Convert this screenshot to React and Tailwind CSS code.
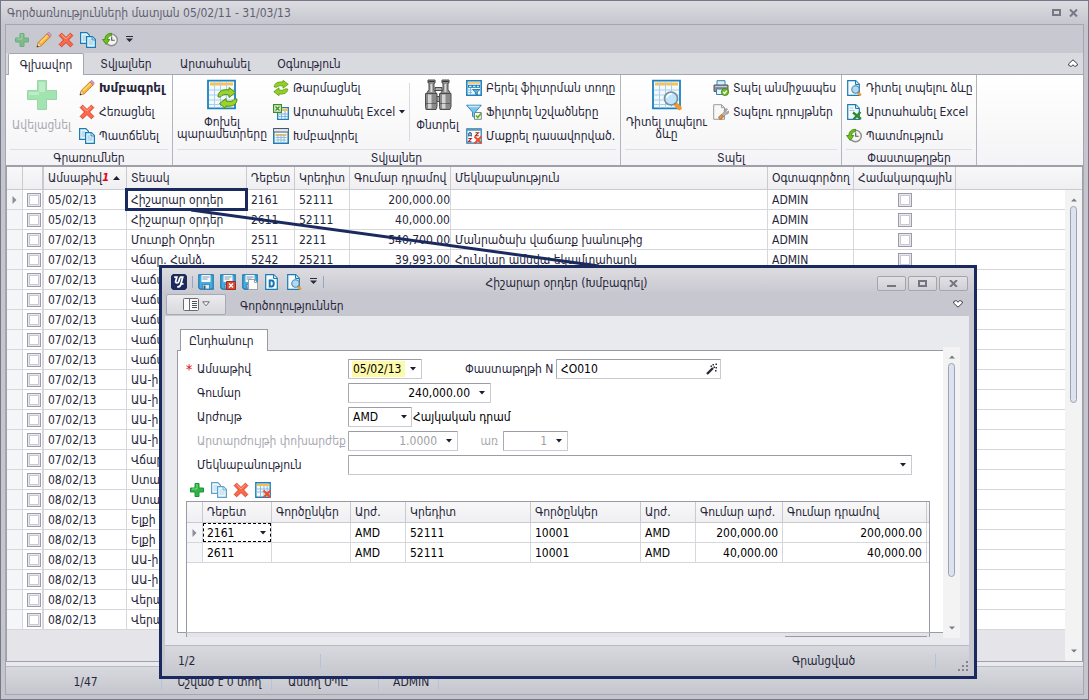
import React from "react";

/* ---------- icons ---------- */

const Svg = ({ size = 16, children, className = "" }) => (
  <svg
    width={size}
    height={size}
    viewBox={`0 0 ${size} ${size}`}
    className={`shrink-0 ${className}`}
    aria-hidden="true"
  >
    {children}
  </svg>
);

const PlusIcon = ({ faded = false }) => (
  <Svg className={faded ? "opacity-50" : ""}>
    <path d="M6 1.500h4V6h4.500v4H10v4.500H6V10H1.500V6H6z" fill="#2fb344" stroke="#1d9434" />
    <path d="M7 2.500h1V7H3" fill="none" stroke="#7fdc8c" />
  </Svg>
);

const BigPlusIcon = () => (
  <Svg size={32}>
    <path d="M11.500 1.500h9v10h10v9h-10v10h-9v-10h-10v-9h10z" fill="#a3e3b0" stroke="#9bd6a8" />
    <path d="M13 3h6v10H13zM3 13h10v3H3z" fill="#bdedc6" />
  </Svg>
);

const PencilIcon = () => (
  <Svg>
    <path d="M1 15l1.300-4.600L11 1.800l3.300 3L5.500 13.600z" fill="#fbb034" stroke="#b5741c" strokeWidth=".8" />
    <path d="M3.500 10.300L11 3l1.200 1L4.800 11.600z" fill="#ffd777" />
    <path d="M11 1.800l1.200-1.200c.6-.6 3.600 2 2.900 2.900l-1 1.300z" fill="#d79bc4" stroke="#a66a96" strokeWidth=".6" />
    <path d="M1 15l1.300-4.200 2.900 2.800z" fill="#fbe3bd" stroke="#b5741c" strokeWidth=".5" />
    <path d="M.8 15.200l.6-2 1.500 1.300z" fill="#333" />
  </Svg>
);

const CrossIcon = () => (
  <Svg>
    <path
      d="M3.600 1.200L8 5.400l4.400-4.200 2.400 2.400L10.500 8l4.300 4.400-2.400 2.400L8 10.600l-4.400 4.200-2.400-2.400L5.500 8 1.200 3.600z"
      fill="#fb6a4a"
      stroke="#d8321c"
      strokeWidth=".9"
    />
    <path d="M3.600 2.600L8 6.800l4.400-4.200" fill="none" stroke="#ffab95" />
  </Svg>
);

const CopyIcon = ({ soft = false }) => (
  <Svg className={soft ? "opacity-70" : ""}>
    <path d="M.6.600h6.200l2.600 2.600v8.200H.6z" fill="#e9f6fd" stroke="#1a7cb2" strokeWidth="1.200" />
    <path d="M2.500 4h3.500M2.500 6h5M2.500 8h5" stroke="#8cc6e4" />
    <path d="M6.600 4.600h5.800l3 3v7.800H6.600z" fill="#e3f3fc" stroke="#1a7cb2" strokeWidth="1.200" />
    <path d="M12 4.800v3.200h3.200" fill="#bfe2f4" stroke="#1a7cb2" strokeWidth=".8" />
    <path d="M8.500 8h2.500M8.500 10h5M8.500 12h5" stroke="#8cc6e4" />
  </Svg>
);

const HistoryIcon = () => (
  <Svg>
    <circle cx="9.500" cy="8" r="5.800" fill="#f4f4f1" stroke="#8f8f8a" strokeWidth="1.400" />
    <path d="M9.700 4.500V8.300h3" fill="none" stroke="#555" strokeWidth="1.100" />
    <path d="M9.500 1.300C5 1.300 3 4 2.800 7.500H.5l3.700 5 3.600-5H5.600C5.700 5.200 7 3.700 9.500 3.500z" fill="#6fc11d" stroke="#3c8310" strokeWidth=".8" />
  </Svg>
);

const RefreshIcon = () => (
  <Svg>
    <path d="M1.200 7C1.200 3.200 5 1.400 10 2V.3l5.200 4L10 8.200V6C7 5.500 5 5.800 3.800 7.200z" fill="#93cf26" stroke="#5c9a12" strokeWidth=".8" />
    <path d="M14.800 9c0 3.800-3.800 5.600-8.800 5v1.700L.8 11.700 6 7.800V10c3 .5 5 .2 6.200-1.200z" fill="#93cf26" stroke="#5c9a12" strokeWidth=".8" />
  </Svg>
);

const SheetShape = () => (
  <>
    <path d="M.8.800h14.400v14.400H.8z" fill="#f2f8fd" stroke="#1c7fb8" strokeWidth="1.400" />
    <path d="M2 2h12v2H2z" fill="#f8bd4a" />
    <path d="M2 7h12M2 10h12M5.500 4v10M9 4v10M12.200 4v10" stroke="#8bbfe6" />
  </>
);

const ExcelTableIcon = () => (
  <Svg>
    <path d="M4.700 3.700h10.600v11.600H4.700z" fill="#f2f8fd" stroke="#1c7fb8" strokeWidth="1.300" />
    <path d="M9 5h6v2H9z" fill="#f8bd4a" />
    <path d="M6 10h9M6 12.500h9M8.500 9v6M12 7v8" stroke="#7fb4e2" />
    <path d="M.6.600h7.800v7.800H.6z" fill="#e7f5df" stroke="#3f8d22" strokeWidth="1.200" />
    <path d="M2.500 2.500l4 4M6.500 2.500l-4 4" stroke="#3f8d22" strokeWidth="1.300" />
  </Svg>
);

const GroupIcon = () => (
  <Svg>
    <path d="M.7.700h14.600v14.600H.7z" fill="#f2f8fd" stroke="#46566b" strokeWidth="1.200" />
    <path d="M1 1.200h14v2.300H1z" fill="#dfe7f0" />
    <path d="M.7 4h14.600" stroke="#46566b" />
    <path d="M.7 4.500v10.800h14.600V4.500" fill="none" stroke="#1c7fb8" strokeWidth="1.200" />
    <path d="M2.500 6h11v2h-11z" fill="#f8bd4a" />
    <path d="M2.500 9.500h11M2.500 12h11M5 6v8M8 6v8M11 6v8" stroke="#8bbfe6" />
  </Svg>
);

const FilterRowIcon = () => (
  <Svg>
    <path d="M.8.800h14.400v14.400H.8z" fill="#eef7fd" stroke="#1c7fb8" strokeWidth="1.500" />
    <path d="M2 2.200h12v1.500H2z" fill="#f8bd4a" />
    <path d="M2 4.800h12v3H2z" fill="#1c7fb8" />
    <path d="M3 6.300h2.500M7 6.300h2.500M11 6.300h2" stroke="#fff" />
    <path d="M2 10h4M2 12.500h4M4.500 8v6" stroke="#8bbfe6" />
    <path d="M6.500 9.500h7.500l-2.700 2.500v3l-2-1v-2z" fill="#58aee0" stroke="#1c6d9f" strokeWidth=".8" />
  </Svg>
);

const FilterCheckIcon = () => (
  <Svg>
    <path d="M.5 1.200h14.800L9.500 8v6l-3-1.600V8z" fill="#7cc3ec" stroke="#2b82b5" strokeWidth=".9" />
    <path d="M2 1.700h12l-1.200 1.500H3.200z" fill="#cdeafa" />
    <path d="M8.500 8.500h6.800v6.800H8.500z" fill="#f7fcf3" stroke="#6b7884" strokeWidth=".9" />
    <path d="M10 11.500l1.800 2L15 9.500" fill="none" stroke="#5eb01c" strokeWidth="1.700" />
  </Svg>
);

const ClearSortIcon = () => (
  <Svg>
    <path d="M.8.800h14.400v14.400H.8z" fill="#f9fbfd" stroke="#1c7fb8" strokeWidth="1.200" />
    <path d="M1 1h14v1.800H1z" fill="#6b93b4" />
    <path d="M2.700 8.500V5.500l1.300-1 1.300 1v3M2.700 7.200h2.600" fill="none" stroke="#1b5d94" strokeWidth="1.100" />
    <path d="M2.300 10.500h3l-3 3.300h3.200" fill="none" stroke="#b02a1a" strokeWidth="1.100" />
    <path d="M9.500 4.700h3l-3 3h3.300" fill="none" stroke="#b02a1a" strokeWidth="1.100" />
    <path d="M8.500 8.500l7 7M15.500 8.500l-7 7" stroke="#ef4b2b" strokeWidth="2" />
  </Svg>
);

const BigRefreshTableIcon = () => (
  <Svg size={32}>
    <path d="M2 1.700h27v27.600H2z" fill="#f3f9fe" stroke="#1c82bd" strokeWidth="1.800" />
    <path d="M4 3.500h23v3H4z" fill="#fbc04f" />
    <path d="M3 11h25M3 16h25M3 21h25M3 25.500h25M8.500 3v26M14.500 3v26M20.500 3v26" stroke="#a8cfec" />
    <path d="M12 18C12 12 17 10 23 11V8.500l6.500 5-6.500 5V16c-4-1-7-.5-8.500 2z" fill="#9ad32c" stroke="#518d10" />
    <path d="M31 20c0 6-5 8-11 7v3l-6.500-5.500L20 19.500V22c4 1 7 .5 8.500-2z" fill="#9ad32c" stroke="#518d10" />
  </Svg>
);

const BigPreviewIcon = () => (
  <Svg size={32}>
    <path d="M2 1.700h27v27.600H2z" fill="#f3f9fe" stroke="#1c82bd" strokeWidth="1.800" />
    <path d="M4 3.500h23v3H4z" fill="#fbc04f" />
    <path d="M3 11h25M3 16h25M3 21h25M3 25.500h25M8.500 3v26M14.500 3v26M20.500 3v26" stroke="#a8cfec" />
    <path d="M24.500 25l4 4" stroke="#f09a2c" strokeWidth="4.500" strokeLinecap="round" />
    <circle cx="20" cy="19.500" r="6.500" fill="#bfe5fb" stroke="#7d8f9d" strokeWidth="1.700" />
    <path d="M15.800 19a4.500 4.500 0 0 1 5-4" fill="none" stroke="#fff" strokeWidth="1.500" />
  </Svg>
);

const BinocularsIcon = () => (
  <Svg size={32}>
    <path d="M13 8.500h7v3h-7zM13 17.500h7v5h-7z" fill="#aaa" stroke="#4c4c4c" />
    {[0, 14].map((dx) => (
      <g key={dx} transform={`translate(${dx} 0)`}>
        <path d="M6 1h7v3h-1v6.500l2.500 4V16h-10v-1.500l2.500-4V4H6z" fill="#8d8d8d" stroke="#4c4c4c" />
        <path d="M3.500 14.500h11.500v13l-1 3h-10l-.5-3z" fill="#8a8a8a" stroke="#4c4c4c" />
        <path d="M6 15.500h3.500v14H6z" fill="#d4d4d4" />
        <path d="M8.500 5h1.800v8H8.500z" fill="#dcdcdc" />
        <path d="M4.500 24.500h10" stroke="#333" strokeDasharray="1 1" />
        <path d="M6.500 2.500h6" stroke="#333" />
      </g>
    ))}
  </Svg>
);

const PrinterIcon = () => (
  <Svg>
    <path d="M4 .7h8v5H4z" fill="#d8effb" stroke="#3c7fa8" />
    <path d="M1 5h14v6.500H1z" fill="#8b9097" stroke="#565b62" />
    <path d="M2 6.500h12" stroke="#c9ced4" />
    <path d="M3.500 9h9v5.500h-9z" fill="#e6f3fb" stroke="#3c7fa8" />
    <circle cx="12" cy="12" r="3.600" fill="#74bd2a" stroke="#3f8413" strokeWidth=".8" />
    <path d="M10.200 12l1.400 1.500 2.300-2.800" fill="none" stroke="#fff" strokeWidth="1.200" />
  </Svg>
);

const PageSettingsIcon = () => (
  <Svg>
    <path d="M.7.700h7.800l3 3v11.600H.7z" fill="#f8f8f8" stroke="#9a9a9a" />
    <path d="M8.500.700v3h3" fill="none" stroke="#9a9a9a" />
    <path d="M14.500 5c-2-1-4 1-3.200 2.800L6.500 13l1.700 2 5-5c1.800.5 3.200-1.500 2.300-3l-1.600 1.300-1.100-1z" fill="#b7b7b7" stroke="#777" strokeWidth=".6" />
    <path d="M5.700 13l2.500-2.500 2.400 2.300-2.500 2.400c-1 .8-3.200-1.200-2.400-2.200z" fill="#e89040" stroke="#9c5a1c" strokeWidth=".6" />
  </Svg>
);

const PageShape = () => (
  <>
    <path d="M1.700.700h8l3.600 3.600v11H1.700z" fill="#f4fafe" stroke="#1a7cb2" strokeWidth="1.200" />
    <path d="M9.500.700v3.800h3.800" fill="#cbe7f6" stroke="#1a7cb2" />
  </>
);

const PagePreviewIcon = () => (
  <Svg>
    <PageShape />
    <path d="M12.500 13l1.600 1.600" stroke="#f09a2c" strokeWidth="2.600" strokeLinecap="round" />
    <circle cx="9.500" cy="9.500" r="3.700" fill="#a9dcf8" stroke="#5d829b" strokeWidth="1.100" />
  </Svg>
);

const PageExcelIcon = () => (
  <Svg>
    <PageShape />
    <path d="M7 8.500l8 6.500M14.500 8l-7 7.300" stroke="#2f8a2a" strokeWidth="2.300" />
    <path d="M3.500 4h4M3.500 6.500h5" stroke="#9ccbe6" />
  </Svg>
);

const TableRemoveIcon = () => (
  <Svg>
    <SheetShape />
    <path d="M8.500 8.500l7 7M15.500 8.500l-7 7" stroke="#ef4b2b" strokeWidth="2" />
  </Svg>
);

const DisketteShape = () => (
  <>
    <path d="M.8.800h14.400v14.400H2.300L.8 13.700z" fill="#45aade" stroke="#1c78ae" strokeWidth="1.200" />
    <path d="M3.500 1h9v7h-9z" fill="#f5fafd" />
    <path d="M4.500 3h7M4.500 5h5" stroke="#8a98a4" />
    <path d="M4.500 10.500h7V15h-7z" fill="#e1e8ee" stroke="#1c78ae" strokeWidth=".7" />
    <path d="M5.500 11.500h2V15h-2z" fill="#4a5a68" />
  </>
);

const SaveIcon = () => (
  <Svg>
    <DisketteShape />
  </Svg>
);

const SaveCloseIcon = () => (
  <Svg>
    <DisketteShape />
    <path d="M6.500 7.500h9v8h-9z" fill="#dd4a3a" stroke="#9e2a20" />
    <path d="M9 9.500l4 4M13 9.500l-4 4" stroke="#fff" strokeWidth="1.400" />
  </Svg>
);

const SaveNewIcon = () => (
  <Svg>
    <DisketteShape />
    <path d="M6.500 5.500h6l3 3v7h-9z" fill="#fcfcfc" stroke="#9aa1a8" />
    <path d="M12.500 5.500v3h3" fill="none" stroke="#9aa1a8" />
  </Svg>
);

const PageDIcon = () => (
  <Svg>
    <PageShape />
    <path d="M5.700 6.500h1.800c3 0 3 6 0 6H5.700z" fill="none" stroke="#1473ad" strokeWidth="1.900" />
  </Svg>
);

const LogoIcon = () => (
  <Svg>
    <path d="M2 0h12l2 2v12l-2 2H2l-2-2V2z" fill="#1d2a5e" />
    <path
      d="M3.200 3.200h2.600L4.600 7.500c-.4 1.700 2.600 1.700 3.200 0L9 3.400M8.800 3.200h2.900L9.800 10.500c-.5 1.900-1.800 2.600-3.600 2.400M10 9.800h2.500"
      fill="none"
      stroke="#fff"
      strokeWidth="1.800"
    />
  </Svg>
);

const WandIcon = () => (
  <Svg size={12}>
    <path d="M1 11l6-6" stroke="#2a2a38" strokeWidth="2.400" />
    <path d="M6.500 1H8v1.500H6.500zM9.500 4H11v1.500H9.500zM4.500 2.500H6V4H4.500zM9 7h1.500v1.500H9zM9.500.5H11V2H9.500zM7.500 3.500H9V5H7.500z" fill="#2a2a38" />
  </Svg>
);

const Caret = () => (
  <svg width="6" height="4" viewBox="0 0 6 4" className="shrink-0" aria-hidden="true">
    <path d="M0 0h6L3 3.500z" fill="#1e1e30" />
  </svg>
);

const MoreCaret = () => (
  <svg width="7" height="7" viewBox="0 0 7 7" className="shrink-0" aria-hidden="true">
    <path d="M0 .5h7" stroke="#2a2a38" />
    <path d="M0 2.500h7L3.500 6z" fill="#2a2a38" />
  </svg>
);

const ScrollArrow = ({ up = false }) => (
  <svg width="6" height="4" viewBox="0 0 6 4" className="shrink-0" aria-hidden="true">
    <path d={up ? "M0 3.500h6L3 .5z" : "M0 .5h6L3 3.500z"} fill="#7a7a86" />
  </svg>
);

const RowArrow = () => (
  <svg width="5" height="8" viewBox="0 0 5 8" className="mx-auto" aria-hidden="true">
    <path d="M.5 0L4.500 4 .5 8z" fill="#8e8e9a" />
  </svg>
);

const RibbonFold = ({ down = false }) => (
  <svg width="10" height="8" viewBox="0 0 10 8" className={down ? "rotate-180" : ""} aria-hidden="true">
    <path d="M5 .8L9.300 4.800v1.500l-1.500.9H6.500L5 5.800 3.500 7.200H2.200L.7 6.300V4.800z" fill="#fff" stroke="#3a3a4a" />
  </svg>
);

/* ---------- shared controls ---------- */

const IconButton = ({ label, children }) => (
  <button type="button" aria-label={label} className="flex h-4 items-center justify-center">
    {children}
  </button>
);

const SmallButton = ({ icon, children, bold = false, menu = false }) => (
  <button
    type="button"
    className={`flex h-6 items-center gap-1 whitespace-nowrap ${bold ? "font-['DejaVu_Sans',sans-serif] font-bold" : ""}`}
  >
    {icon}
    <span>{children}</span>
    {menu && <Caret />}
  </button>
);

const ButtonStack = ({ className = "", children }) => (
  <div className={`flex flex-col pt-px ${className}`}>{children}</div>
);

const BigButton = ({ icon, lines, disabled = false, className }) => (
  <button
    type="button"
    disabled={disabled}
    className={`flex flex-col items-center pt-1 ${disabled ? "text-[#a9a9b1]" : ""} ${className}`}
  >
    {icon}
    <span className={`flex flex-col whitespace-nowrap leading-3 ${lines.length > 1 ? "pt-[5px]" : "pt-2"}`}>
      {lines.map((l) => (
        <span key={l}>{l}</span>
      ))}
    </span>
  </button>
);

const RibbonGroup = ({ title, className, children }) => (
  <section className={`flex shrink-0 flex-col border-r border-[#b4b4be] ${className}`}>
    <div className="flex flex-1">{children}</div>
    <h2 className="mx-1 h-4 border-t border-[#dedee3] text-center leading-4">{title}</h2>
  </section>
);

const Check = ({ label }) => (
  <input
    type="checkbox"
    aria-label={label}
    className="mx-auto block size-3.5 appearance-none border border-[#9c9ca8] bg-white shadow-[inset_0_0_0_1px_#e6e6ec,inset_0_0_0_2px_#c9c9d5]"
  />
);

const ScrollBar = ({ className = "", thumb }) => (
  <div className={`flex w-[17px] shrink-0 flex-col items-center bg-[#f3f3f4] py-2 ${className}`}>
    <ScrollArrow up />
    <div className="mt-1 flex w-full flex-1 justify-center">
      <div className={`w-[7px] rounded-full border border-[#9da2b2] bg-[#dde2f1] ${thumb}`} />
    </div>
    <ScrollArrow />
  </div>
);

const field =
  "flex h-5 shrink-0 items-center rounded-[1px] border border-[#c9c9d2] border-t-[#9c9ca6] border-l-[#a9a9b3] bg-white";

const ComboInput = ({ id, value, className, right = false, disabled = false, highlight = false }) => (
  <div className={`${field} ${className}`}>
    <input
      id={id}
      defaultValue={value}
      disabled={disabled}
      className={`h-4 min-w-0 flex-1 outline-none ${highlight ? "ml-[3px] bg-[#fdfbaa] px-px" : "px-1"} ${right ? "text-right" : ""} ${disabled ? "text-[#a0a0a8]" : "text-black"}`}
    />
    <button type="button" aria-label="Ցուցակ" className="flex h-full w-4 items-center justify-center">
      <Caret />
    </button>
  </div>
);

const FormRow = ({ id, label, required = false, disabled = false, children }) => (
  <div className="flex h-5 items-center">
    <span className="w-[11px] shrink-0 text-sm text-red-600">{required ? "*" : ""}</span>
    <label htmlFor={id} className={`w-[151px] shrink-0 whitespace-nowrap ${disabled ? "text-[#a9a9b1]" : ""}`}>
      {label}
    </label>
    {children}
  </div>
);

/* ---------- data ---------- */

const rows = [
  ["05/02/13", "Հիշարար օրդեր", "2161", "52111", "200,000.00", "", "ADMIN"],
  ["05/02/13", "Հիշարար օրդեր", "2611", "52111", "40,000.00", "", "ADMIN"],
  ["07/02/13", "Մուտքի Օրդեր", "2511", "2211", "540,700.00", "Մանրածախ վաճառք խանութից", "ADMIN"],
  ["07/02/13", "Վճար. Հանձ.", "5242", "25211", "39,993.00", "Հունվար ամսվա եկամտահարկ", "ADMIN"],
  ["07/02/13", "Վաճառք"],
  ["07/02/13", "Վաճառք"],
  ["07/02/13", "Վաճառք"],
  ["07/02/13", "Վաճառք"],
  ["07/02/13", "Վաճառք"],
  ["07/02/13", "ԱԱ-ի"],
  ["07/02/13", "ԱԱ-ի"],
  ["07/02/13", "ԱԱ-ի"],
  ["07/02/13", "ԱԱ-ի"],
  ["07/02/13", "Վճար"],
  ["08/02/13", "Ստաց"],
  ["08/02/13", "Ստաց"],
  ["08/02/13", "Ելքի"],
  ["08/02/13", "Ելքի"],
  ["08/02/13", "ԱԱ-ի"],
  ["08/02/13", "ԱԱ-ի"],
  ["08/02/13", "Վերա"],
  ["08/02/13", "Վերա"],
];

const entries = [
  ["2161", "", "AMD", "52111", "10001", "AMD", "200,000.00", "200,000.00"],
  ["2611", "", "AMD", "52111", "10001", "AMD", "40,000.00", "40,000.00"],
];

/* ---------- main window ---------- */

function Ribbon() {
  return (
    <div className="flex h-[92px] border-b-2 border-[#a0a0ac] bg-linear-to-b from-white to-[#f4f4f6]">
      <RibbonGroup title="Գրառումներ" className="w-[167px]">
        <BigButton icon={<BigPlusIcon />} lines={["Ավելացնել"]} disabled className="w-[71px]" />
        <ButtonStack className="pl-[2px]">
          <SmallButton icon={<PencilIcon />} bold>Խմբագրել</SmallButton>
          <SmallButton icon={<CrossIcon />}>Հեռացնել</SmallButton>
          <SmallButton icon={<CopyIcon />}>Պատճենել</SmallButton>
        </ButtonStack>
      </RibbonGroup>
      <RibbonGroup title="Տվյալներ" className="w-[448px]">
        <BigButton icon={<BigRefreshTableIcon />} lines={["Փոխել", "պարամետրերը"]} className="w-[98px]" />
        <ButtonStack className="w-[138px] pl-[2px]">
          <SmallButton icon={<RefreshIcon />}>Թարմացնել</SmallButton>
          <SmallButton icon={<ExcelTableIcon />} menu>Արտահանել Excel</SmallButton>
          <SmallButton icon={<GroupIcon />}>Խմբավորել</SmallButton>
        </ButtonStack>
        <div className="my-2 w-px bg-[#d9d9df]" />
        <BigButton icon={<BinocularsIcon />} lines={["Փնտրել"]} className="w-[55px]" />
        <ButtonStack className="pl-px">
          <SmallButton icon={<FilterRowIcon />}>Բերել ֆիլտրման տողը</SmallButton>
          <SmallButton icon={<FilterCheckIcon />}>Ֆիլտրել նշվածները</SmallButton>
          <SmallButton icon={<ClearSortIcon />}>Մաքրել դասավորված.</SmallButton>
        </ButtonStack>
      </RibbonGroup>
      <RibbonGroup title="Տպել" className="w-[221px]">
        <BigButton icon={<BigPreviewIcon />} lines={["Դիտել տպելու", "ձևը"]} className="w-[91px]" />
        <ButtonStack className="pl-px">
          <SmallButton icon={<PrinterIcon />}>Տպել անմիջապես</SmallButton>
          <SmallButton icon={<PageSettingsIcon />}>Տպելու դրույթներ</SmallButton>
        </ButtonStack>
      </RibbonGroup>
      <RibbonGroup title="Փաստաթղթեր" className="w-[135px]">
        <ButtonStack className="pl-1">
          <SmallButton icon={<PagePreviewIcon />}>Դիտել տպելու ձևը</SmallButton>
          <SmallButton icon={<PageExcelIcon />}>Արտահանել Excel</SmallButton>
          <SmallButton icon={<HistoryIcon />}>Պատմություն</SmallButton>
        </ButtonStack>
      </RibbonGroup>
    </div>
  );
}

const th = "overflow-hidden whitespace-nowrap border-r border-[#c9c9d2] px-1 text-left font-normal";
const td = "overflow-hidden whitespace-nowrap border-r border-b border-[#d6d6dc] px-1";

function JournalTable() {
  return (
    <table className="w-full table-fixed border-separate border-spacing-0">
      <colgroup>
        <col className="w-4" />
        <col className="w-5" />
        <col className="w-[84px]" />
        <col className="w-[120px]" />
        <col className="w-[48px]" />
        <col className="w-[55px]" />
        <col className="w-[101px]" />
        <col className="w-[317px]" />
        <col className="w-[86px]" />
        <col className="w-[102px]" />
        <col />
      </colgroup>
      <thead>
        <tr className="h-[23px] bg-linear-to-b from-[#f8f8f9] to-[#efeff1] [&>th]:border-b">
          <th className={th} aria-label="Ընթացիկ" />
          <th className={th} aria-label="Նշված" />
          <th className={`${th} border-l`}>
            <span className="flex items-center">
              Ամսաթիվ
              <span className="text-[11px] font-bold text-red-600 italic">1</span>
              <svg width="7" height="4" viewBox="0 0 7 4" className="ml-1" aria-hidden="true">
                <path d="M0 4h7L3.500 0z" fill="#1e1e30" />
              </svg>
            </span>
          </th>
          <th className={th}>Տեսակ</th>
          <th className={th}>Դեբետ</th>
          <th className={th}>Կրեդիտ</th>
          <th className={th}>Գումար դրամով</th>
          <th className={th}>Մեկնաբանություն</th>
          <th className={th}>Օգտագործող</th>
          <th className={th}>Համակարգային</th>
          <th className="border-[#c9c9d2]" aria-label="Այլ" />
        </tr>
      </thead>
      <tbody className="bg-white">
        {rows.map(([date, kind, debit, credit, sum, note, user], i) => (
          <tr key={i} className="h-5">
            <td className={`${td} bg-[#f5f6f8] px-0`}>{i === 0 && <RowArrow />}</td>
            <td className={`${td} px-0`}>
              <Check label={`Նշել ${i + 1}`} />
            </td>
            <td className={`${td} border-l`}>{date}</td>
            <td className={td}>{kind}</td>
            <td className={td}>{debit}</td>
            <td className={td}>{credit}</td>
            <td className={`${td} pr-0 text-right`}>{sum}</td>
            <td className={td}>{note}</td>
            <td className={td}>{user}</td>
            <td className={td}>
              <Check label={`Համակարգային ${i + 1}`} />
            </td>
            <td className="border-b border-[#d6d6dc]" />
          </tr>
        ))}
      </tbody>
    </table>
  );
}

/* ---------- dialog ---------- */

const WinButton = ({ label, children }) => (
  <button
    type="button"
    aria-label={label}
    className="flex h-[15px] w-[29px] items-center justify-center rounded-[2px] border border-[#a4a4ae] bg-linear-to-b from-[#e2e2e6] to-[#cfcfd5]"
  >
    {children}
  </button>
);

function EntryTable() {
  return (
    <table className="w-full table-fixed border-separate border-spacing-0">
      <colgroup>
        <col className="w-4" />
        <col className="w-[69px]" />
        <col className="w-[79px]" />
        <col className="w-[55px]" />
        <col className="w-[125px]" />
        <col className="w-[110px]" />
        <col className="w-[55px]" />
        <col className="w-[87px]" />
        <col />
        <col className="w-[2px]" />
      </colgroup>
      <thead>
        <tr className="h-[21px] bg-linear-to-b from-[#f8f8f9] to-[#efeff1] [&>th]:border-b">
          <th className={th} aria-label="Ընթացիկ" />
          {["Դեբետ", "Գործընկեր", "Արժ.", "Կրեդիտ", "Գործընկեր", "Արժ.", "Գումար արժ.", "Գումար դրամով"].map((h, i) => (
            <th key={i} className={th}>{h}</th>
          ))}
          <th className="border-[#c9c9d2]" aria-label="Այլ" />
        </tr>
      </thead>
      <tbody className="text-black">
        {entries.map((r, i) => (
          <tr key={i} className="h-5">
            <td className={`${td} bg-[#f5f6f8] px-0`}>{i === 0 && <RowArrow />}</td>
            {r.map((c, j) =>
              i === 0 && j === 0 ? (
                <td key={j} className="border-r border-b border-[#d6d6dc] p-0">
                  <div className="flex h-[19px] items-center border border-dashed border-black pr-1">
                    <select aria-label="Դեբետ" className="min-w-0 flex-1 appearance-none pl-[3px] outline-none">
                      <option>2161</option>
                      <option>2611</option>
                    </select>
                    <Caret />
                  </div>
                </td>
              ) : (
                <td key={j} className={`${td} ${j > 5 ? "text-right" : ""}`}>{c}</td>
              )
            )}
            <td className="border-b border-[#d6d6dc]" />
          </tr>
        ))}
      </tbody>
    </table>
  );
}

function OrderDialog() {
  return (
    <div
      role="dialog"
      aria-label="Հիշարար օրդեր (Խմբագրել)"
      className="absolute top-[264px] left-[158px] flex w-[818px] flex-col border-[3px] border-[#1b2a5e] bg-[#c7c7d0]"
    >
      <div className="flex h-6 items-center bg-linear-to-b from-[#dcdce0] to-[#c9c9d1] pt-[3px] pr-[6px] pl-[9px]">
        <LogoIcon />
        <div className="ml-[5px] h-3 w-px bg-[#9aa4c4]" />
        <div className="ml-[5px] flex items-center gap-1.5">
          <IconButton label="Պահպանել"><SaveIcon /></IconButton>
          <IconButton label="Պահպանել և փակել"><SaveCloseIcon /></IconButton>
          <IconButton label="Պահպանել և ստեղծել"><SaveNewIcon /></IconButton>
          <IconButton label="Փաստաթուղթ"><PageDIcon /></IconButton>
          <IconButton label="Դիտել"><PagePreviewIcon /></IconButton>
          <span className="ml-[2px] flex"><IconButton label="Ավելին"><MoreCaret /></IconButton></span>
        </div>
        <div className="ml-[6px] h-3 w-px bg-[#9aa4c4]" />
        <h1 className="flex-1 pt-[2px] text-center">Հիշարար օրդեր (Խմբագրել)</h1>
        <div className="ml-[68px] flex gap-[2px] pt-1">
          <WinButton label="Ծալել"><span className="mt-1 h-0.5 w-[9px] bg-[#757582]" /></WinButton>
          <WinButton label="Մեծացնել"><span className="h-[7px] w-[9px] border-2 border-[#757582]" /></WinButton>
          <WinButton label="Փակել">
            <svg width="9" height="7" viewBox="0 0 9 7" aria-hidden="true"><path d="M1 0l7 7M8 0L1 7" stroke="#757582" strokeWidth="2" /></svg>
          </WinButton>
        </div>
      </div>
      <div className="flex h-6 items-center pr-[11px] pl-1">
        <button
          type="button"
          aria-label="Ընտրացանկ"
          className="flex h-[21px] w-[60px] items-center justify-center gap-[2px] rounded-[2px] border border-[#a9a9b3] bg-linear-to-b from-[#ececef] to-[#d8d8dd]"
        >
          <svg width="17" height="13" viewBox="0 0 17 13" aria-hidden="true">
            <rect x=".5" y=".5" width="15" height="12" rx="1" fill="#fafafa" stroke="#6a6a76" />
            <path d="M6.500 1v11" stroke="#6a6a76" />
            <path d="M9 3.500h5M9 5.500h5M9 7.500h5M9 9.500h5" stroke="#50505c" />
          </svg>
          <svg width="8" height="6" viewBox="0 0 8 6" aria-hidden="true"><path d="M.7 .8h6.600L4 4.800z" fill="#fff" stroke="#6a6a76" /></svg>
        </button>
        <span className="flex-1 pt-1 pl-[14px]">Գործողություններ</span>
        <IconButton label="Ծալել ժապավենը"><RibbonFold down /></IconButton>
      </div>

      <div className="mr-[5px] ml-[3px] flex flex-col bg-[#e9eaee] pt-[13px]">
        <div className="flex">
          <div className="min-w-0 flex-1 pl-3">
            <button
              type="button"
              className="relative z-10 ml-[3px] block h-[22px] w-[88px] border border-b-0 border-[#9a9aa6] bg-white pl-2 text-left"
            >
              Ընդհանուր
            </button>
            <div className="-mt-px border border-r-0 border-[#9a9aa6] bg-white pt-2 pl-2">
              <div className="flex flex-col gap-1">
                <FormRow id="date" label="Ամսաթիվ" required>
                  <ComboInput id="date" value="05/02/13" className="w-[74px]" highlight />
                  <label htmlFor="doc" className="ml-[43px] w-[91px] whitespace-nowrap">Փաստաթղթի N</label>
                  <div className={`${field} w-[165px] pr-[2px]`}>
                    <input id="doc" defaultValue="ՀՕ010" className="h-4 min-w-0 flex-1 px-1 text-black outline-none" />
                    <IconButton label="Լրացնել"><WandIcon /></IconButton>
                  </div>
                </FormRow>
                <FormRow id="sum" label="Գումար">
                  <ComboInput id="sum" value="240,000.00" right className="w-[143px]" />
                </FormRow>
                <FormRow id="cur" label="Արժույթ">
                  <div className={`${field} w-16 pr-1`}>
                    <select id="cur" className="min-w-0 flex-1 appearance-none pl-1 text-black outline-none">
                      <option>AMD</option>
                      <option>USD</option>
                    </select>
                    <Caret />
                  </div>
                  <span className="pl-px text-black">Հայկական դրամ</span>
                </FormRow>
                <FormRow id="rate" label="Արտարժույթի փոխարժեք" disabled>
                  <ComboInput id="rate" value="1.0000" right disabled className="w-[110px]" />
                  <label htmlFor="per" className="w-[45px] pr-[5px] text-right text-[#a9a9b1]">առ</label>
                  <ComboInput id="per" value="1" right disabled className="w-[65px]" />
                </FormRow>
                <FormRow id="note" label="Մեկնաբանություն">
                  <ComboInput id="note" value="" className="w-[564px]" />
                </FormRow>
              </div>
              <div className="flex gap-1.5 pt-[7px] pb-[3px] pl-[3px]">
                <IconButton label="Ավելացնել"><PlusIcon /></IconButton>
                <IconButton label="Պատճենել"><CopyIcon soft /></IconButton>
                <IconButton label="Հեռացնել"><CrossIcon /></IconButton>
                <IconButton label="Մաքրել"><TableRemoveIcon /></IconButton>
              </div>
              <div className="mr-[13px] min-h-[131px] overflow-hidden border border-b-0 border-[#9a9aa6]">
                <EntryTable />
              </div>
            </div>
            <div className="relative -mt-px mr-[13px] ml-[9px] flex h-[5px] justify-end border-x border-t border-x-[#9a9aa6] border-t-[#c0c0ca] bg-[#e3e3e9] pr-[2px]">
              <div className="w-[142px] border-b border-[#9a9aa6]" />
            </div>
          </div>
          <ScrollBar className="-mb-px mt-[18px] mr-[9px]" thumb="h-[214px]" />
        </div>
        <div className="mt-2 flex h-[31px] items-center border-t border-[#b9b9c2] bg-linear-to-b from-[#d8d9de] to-[#c6c7ce] pl-[13px]">
          <span className="w-[142px]">1/2</span>
          <span className="h-3.5 w-px bg-[#b4c2e0]" />
          <span className="flex-1" />
          <span className="w-[143px]">Գրանցված</span>
          <span className="h-3.5 w-px bg-[#b4c2e0]" />
          <svg width="33" height="30" viewBox="0 0 33 30" aria-hidden="true">
            <path d="M30 15h2v2h-2zM26 19h2v2h-2zM30 19h2v2h-2zM22 23h2v2h-2zM26 23h2v2h-2zM30 23h2v2h-2z" fill="#83838f" />
          </svg>
        </div>
      </div>
    </div>
  );
}

export default function App() {
  return (
    <div className="relative flex min-h-screen flex-col border border-[#77778a] bg-linear-to-b from-[#dcdce1] to-[#c5c5ce] to-[24px] px-1 pb-1 font-['DejaVu_Sans_Condensed','DejaVu_Sans',sans-serif] text-xs text-[#26263a]">
      <header className="flex h-[23px] shrink-0 items-center pr-[6px] pl-[2px] text-[#5f5f70]">
        <h1 className="flex-1">Գործառնությունների մատյան 05/02/11 - 31/03/13</h1>
        <button type="button" aria-label="Մեծացնել" className="mr-2 h-[7px] w-[9px] border-2 border-[#777785]" />
        <button type="button" aria-label="Փակել">
          <svg width="9" height="8" viewBox="0 0 9 8" aria-hidden="true"><path d="M1 .5l7 7M8 .5l-7 7" stroke="#777785" strokeWidth="2" /></svg>
        </button>
      </header>

      <div className="flex flex-1 flex-col border border-[#a6a6b1]">
        <div className="flex h-7 items-center gap-1.5 bg-[#c8c8d1] pt-px pl-2">
          <IconButton label="Ավելացնել"><PlusIcon faded /></IconButton>
          <IconButton label="Խմբագրել"><PencilIcon /></IconButton>
          <IconButton label="Հեռացնել"><CrossIcon /></IconButton>
          <IconButton label="Պատճենել"><CopyIcon /></IconButton>
          <IconButton label="Պատմություն"><HistoryIcon /></IconButton>
          <span className="ml-[2px] flex"><IconButton label="Ավելին"><MoreCaret /></IconButton></span>
        </div>
        <nav className="flex h-[22px] items-end border-b border-[#a6a6b1] bg-[#d9dadf] pr-[5px] pl-[2px]">
          <button type="button" className="-mb-px h-[22px] w-[76px] rounded-t-[2px] border border-b-0 border-[#a6a6b1] bg-white">Գլխավոր</button>
          <button type="button" className="h-[20px] w-[84px]">Տվյալներ</button>
          <button type="button" className="h-[20px] w-[94px]">Արտահանել</button>
          <button type="button" className="h-[20px] w-[94px]">Օգնություն</button>
          <span className="flex-1" />
          <span className="flex pb-[3px]"><IconButton label="Ծալել ժապավենը"><RibbonFold /></IconButton></span>
        </nav>
        <Ribbon />
        <div className="flex flex-1 border-x border-b border-[#a0a0ac] bg-[#e4e4e9]">
          <div className="min-w-0 flex-1">
            <JournalTable />
          </div>
          <div className="flex flex-col">
            <div className="h-[23px] border-b border-[#c9c9d2] bg-linear-to-b from-[#f8f8f9] to-[#efeff1]" />
            <ScrollBar className="flex-1" thumb="h-[197px]" />
          </div>
        </div>
        <div className="h-1 bg-[#e9e9ee]" />
        <footer className="flex h-7 items-center border-t border-[#b9b9c2] bg-linear-to-b from-[#d8d9de] to-[#c6c7ce] pt-[2px]">
          <span className="w-[155px] pl-1 text-center">1/47</span>
          <span className="w-[110px] border-l border-[#b4c2e0] pl-[15px]">Նշված է 0 տող</span>
          <span className="w-[107px] border-l border-[#b4c2e0] pl-4">Աստղ ՍՊԸ</span>
          <span className="w-[61px] border-x border-[#b4c2e0] pl-[14px]">ADMIN</span>
        </footer>
      </div>

      <svg className="pointer-events-none absolute top-[207px] left-[186px]" width="414" height="60" viewBox="0 0 414 60" aria-hidden="true">
        <path d="M4 2L412 58" stroke="#1b2a5e" strokeWidth="3" />
      </svg>
      <div className="pointer-events-none absolute top-[187px] left-[124px] h-[23px] w-[123px] border-[3px] border-[#1b2a5e]" />
      <OrderDialog />
    </div>
  );
}
